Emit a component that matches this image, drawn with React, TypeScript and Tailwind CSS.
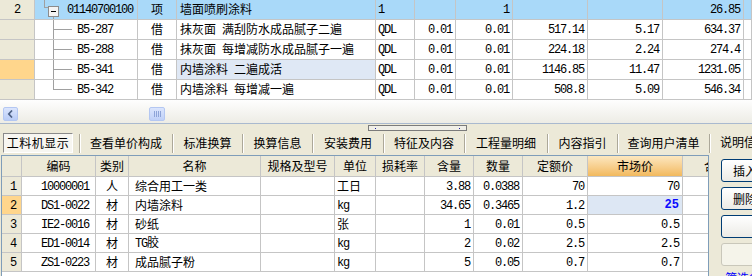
import React from 'react';

const cjk = "font-['Noto_Sans_CJK_SC',sans-serif]";
const mono = "font-['Liberation_Mono',monospace] tracking-[-1.2px]";

// splits a string into ascii runs (mono) and cjk runs
const Txt: React.FC<{ s: string; className?: string }> = ({ s, className = '' }) => (
  <span className={`whitespace-pre leading-none ${className}`}>
    {s
      .split(/([\x20-\x7e]+)/)
      .filter(Boolean)
      .map((p, i) =>
        /^[\x20-\x7e]+$/.test(p) ? (
          <span key={i} className={mono}>{p}</span>
        ) : (
          <span key={i} className={cjk}>{p}</span>
        )
      )}
  </span>
);

type TopRow = {
  num?: string;
  code: string;
  type: string;
  name: string;
  unit: string;
  v: string[];
  tree: 'root' | 'mid' | 'last';
  sel?: boolean;
  cur?: boolean;
};

const topRows: TopRow[] = [
  { num: '2', code: '01140700100', type: '项', name: '墙面喷刷涂料', unit: '1', v: ['', '1', '', '', '26.85'], tree: 'root', sel: true },
  { code: 'B5-287', type: '借', name: '抹灰面 满刮防水成品腻子二遍', unit: 'QDL', v: ['0.01', '0.01', '517.14', '5.17', '634.37'], tree: 'mid' },
  { code: 'B5-288', type: '借', name: '抹灰面 每增减防水成品腻子一遍', unit: 'QDL', v: ['0.01', '0.01', '224.18', '2.24', '274.4'], tree: 'mid' },
  { code: 'B5-341', type: '借', name: '内墙涂料 二遍成活', unit: 'QDL', v: ['0.01', '0.01', '1146.85', '11.47', '1231.05'], tree: 'mid', cur: true },
  { code: 'B5-342', type: '借', name: '内墙涂料 每增减一遍', unit: 'QDL', v: ['0.01', '0.01', '508.8', '5.09', '546.34'], tree: 'last' },
];

const TreeLines: React.FC<{ kind: TopRow['tree'] }> = ({ kind }) =>
  kind === 'root' ? (
    <>
      <span className="absolute left-[9px] top-0 w-px h-[7px] bg-[#a0a0a0]" />
      <span className="absolute left-[9px] top-[7px] w-[4px] h-px bg-[#a0a0a0]" />
      <span className="absolute left-[13px] top-[6px] w-[11px] h-[11px] border border-[#8c8c8c] bg-[#f4f4f4] flex items-center justify-center">
        <span className="w-[5px] h-px bg-black" />
      </span>
      <span className="absolute left-[18px] top-[17px] w-px h-[4px] bg-[#a0a0a0]" />
    </>
  ) : (
    <>
      <span className={`absolute left-[18px] top-0 w-px bg-[#a0a0a0] ${kind === 'last' ? 'h-[10px]' : 'h-[20px]'}`} />
      <span className="absolute left-[18px] top-[9px] w-[19px] h-px bg-[#a0a0a0]" />
    </>
  );

const TopGrid = () => (
  <div className="h-[100px] bg-white overflow-hidden">
    {topRows.map((r, i) => {
      const bg = r.sel ? 'bg-[#a9d9f9]' : 'bg-white';
      const cell = 'h-[20px] border-r border-b border-[#c5c5c5] flex items-center overflow-hidden text-[12px] text-black';
      return (
        <div key={i} className="grid grid-cols-[35px_103px_39px_199px_39px_41px_57px_75px_75px_81px_8px]">
          <div className={`${cell} justify-center ${r.cur ? 'bg-[#ffd68c]' : 'bg-[#ece9d8]'}`}>
            <Txt s={r.num ?? ''} />
          </div>
          <div className={`${cell} ${bg} relative`}>
            <TreeLines kind={r.tree} />
            <Txt s={r.code} className={r.tree === 'root' ? 'pl-[32px]' : 'pl-[42px]'} />
          </div>
          <div className={`${cell} ${bg} justify-center`}>
            <Txt s={r.type} />
          </div>
          <div className={`${cell} ${r.cur ? 'bg-[#dfe8f5]' : bg} pl-[3px]`}>
            <Txt s={r.name} />
          </div>
          <div className={`${cell} ${bg} pl-[2px]`}>
            <Txt s={r.unit} />
          </div>
          {r.v.map((x, j) => (
            <div key={j} className={`${cell} ${bg} justify-end pr-[3px]`}>
              <Txt s={x} />
            </div>
          ))}
          <div className={`${cell} ${bg}`} />
        </div>
      );
    })}
  </div>
);

const HScroll = () => (
  <div className="h-[24px] bg-linear-to-b from-[#fefefe] to-[#edece5] flex items-end pb-[2px] pl-[3px] border-b border-[#a9b9cf]">
    <div className="w-[15px] h-[14px] rounded-[2px] border border-[#b4c7f2] bg-linear-to-b from-[#dbe5fd] to-[#b9ccf6] flex items-center justify-center">
      <svg width="7" height="8" viewBox="0 0 7 8">
        <path d="M5 0.5 L1.8 4 L5 7.5" stroke="#4d6185" strokeWidth="1.7" fill="none" />
      </svg>
    </div>
    <div className="ml-[131px] w-[16px] h-[14px] rounded-[2px] border border-[#b4c7f2] bg-linear-to-b from-[#dbe5fd] to-[#bfd0f8] flex items-center justify-center gap-px">
      <span className="w-px h-[6px] bg-[#8ea4d8]" />
      <span className="w-px h-[6px] bg-[#8ea4d8]" />
      <span className="w-px h-[6px] bg-[#8ea4d8]" />
      <span className="w-px h-[6px] bg-[#8ea4d8]" />
    </div>
  </div>
);

const Splitter = () => (
  <div className="h-[7px]">
    <div className="ml-[368px] mt-[1px] w-[99px] h-[6px] border border-[#7b7b7b] bg-[#f0efe8] flex items-center justify-between px-[6px]">
      <span className="w-px h-px bg-[#2020a0]" />
      <span className="w-px h-px bg-[#2020a0]" />
    </div>
  </div>
);

const tabs = [
  { t: '查看单价构成', w: 'w-[92px]' },
  { t: '标准换算', w: 'w-[69px]' },
  { t: '换算信息', w: 'w-[69px]' },
  { t: '安装费用', w: 'w-[70px]' },
  { t: '特征及内容', w: 'w-[80px]' },
  { t: '工程量明细', w: 'w-[82px]' },
  { t: '内容指引', w: 'w-[69px]' },
  { t: '查询用户清单', w: 'w-[91px]' },
];

const Sep = () => <span className="w-px h-[19px] bg-[#aca899] shadow-[1px_0_0_#ffffff] shrink-0" />;

const Tabs = () => (
  <div className="h-[24px] flex items-center pl-[3px] text-[12px] text-black whitespace-nowrap overflow-hidden">
    <div className="w-[70px] h-[20px] shrink-0 border-t border-l border-[#8a8a8a] border-r-white border-b-white border-r border-b bg-[#f7f6f1] flex items-center justify-center">
      <span className={`${cjk} leading-none tracking-[0.5px]`}>工料机显示</span>
    </div>
    <span className="w-[6px] shrink-0" />
    <Sep />
    {tabs.map((tb) => (
      <React.Fragment key={tb.t}>
        <div className={`${tb.w} shrink-0 flex items-center justify-center`}>
          <span className={`${cjk} leading-none`}>{tb.t}</span>
        </div>
        <Sep />
      </React.Fragment>
    ))}
    <div className="shrink-0 pl-[10px]">
      <span className={`${cjk} leading-none`}>说明信息</span>
    </div>
  </div>
);

const heads = ['', '编码', '类别', '名称', '规格及型号', '单位', '损耗率', '含量', '数量', '定额价', '市场价', '合价'];

const bottomRows = [
  ['1', '10000001', '人', '综合用工一类', '', '工日', '', '3.88', '0.0388', '70', '70'],
  ['2', 'DS1-0022', '材', '内墙涂料', '', 'kg', '', '34.65', '0.3465', '1.2', '25'],
  ['3', 'IE2-0016', '材', '砂纸', '', '张', '', '1', '0.01', '0.5', '0.5'],
  ['4', 'ED1-0014', '材', 'TG胶', '', 'kg', '', '2', '0.02', '2.5', '2.5'],
  ['5', 'ZS1-0223', '材', '成品腻子粉', '', 'kg', '', '5', '0.05', '0.7', '0.7'],
];

const cols = 'grid grid-cols-[20px_74px_33px_132px_74px_41px_49px_49px_49px_65px_95px_67px]';

const BottomGrid = () => (
  <div className="w-[708px] h-full bg-white border-l border-t border-r border-[#7f9db9] overflow-hidden">
    <div className="w-[748px]">
      <div className={cols}>
        {heads.map((h, i) => (
          <div
            key={i}
            className={`h-[21px] border-r border-b border-[#c5c5c5] flex items-center justify-center text-[12px] text-black ${
              i === 10 ? 'bg-linear-to-b from-[#fce7bf] to-[#f2b95c]' : 'bg-[#ece9d8]'
            }`}
          >
            <span className={`${cjk} leading-none`}>{h}</span>
          </div>
        ))}
      </div>
      {bottomRows.map((r, i) => {
        const cell = 'h-[19px] border-r border-b border-[#c5c5c5] flex items-center overflow-hidden text-[12px] text-black';
        const isCur = i === 1;
        return (
          <div key={i} className={cols}>
            <div className={`${cell} pl-[8px] ${isCur ? 'bg-[#ffd68c]' : 'bg-[#ece9d8]'}`}>
              <Txt s={r[0]} />
            </div>
            <div className={`${cell} justify-end pr-[6px]`}>
              <Txt s={r[1]} />
            </div>
            <div className={`${cell} justify-center`}>
              <Txt s={r[2]} />
            </div>
            <div className={`${cell} pl-[6px]`}>
              <Txt s={r[3]} />
            </div>
            <div className={cell} />
            <div className={`${cell} pl-[2px]`}>
              <Txt s={r[5]} />
            </div>
            <div className={cell} />
            <div className={`${cell} justify-end pr-[3px]`}>
              <Txt s={r[7]} />
            </div>
            <div className={`${cell} justify-end pr-[3px]`}>
              <Txt s={r[8]} />
            </div>
            <div className={`${cell} justify-end pr-[3px]`}>
              <Txt s={r[9]} />
            </div>
            {isCur ? (
              <div className={`${cell} justify-end pr-[3px] bg-[#dde7f4]`}>
                <span className="font-['Liberation_Mono',monospace] font-bold text-[#0a0aff] leading-none">{r[10]}</span>
              </div>
            ) : (
              <div className={`${cell} justify-end pr-[3px]`}>
                <Txt s={r[10]} />
              </div>
            )}
            <div className={cell} />
          </div>
        );
      })}
    </div>
  </div>
);

const Btn: React.FC<{ label?: string; disabled?: boolean }> = ({ label = '', disabled }) => (
  <div
    className={`w-[48px] h-[23px] shrink-0 rounded-[3px] border flex items-center justify-center text-[12px] text-black ${
      disabled ? 'border-[#c9c7ba] bg-[#f5f4ea]' : 'border-[#003c74] bg-linear-to-b from-[#ffffff] to-[#ecebe6]'
    }`}
  >
    <span className={`${cjk} leading-none whitespace-nowrap`}>{label}</span>
  </div>
);

const SidePanel = () => (
  <div className="flex-1 overflow-hidden pt-[4px] pl-[12px] flex flex-col gap-[5px]">
    <Btn label="插入" />
    <Btn label="删除" />
    <Btn />
    <Btn disabled />
    <span className={`${cjk} text-[12px] leading-none text-[#0000ff] underline pl-[4px] mt-px whitespace-nowrap`}>筛选条件</span>
  </div>
);

export default function App() {
  return (
    <div className="w-[752px] h-[276px] overflow-hidden bg-[#ece9d8] flex flex-col">
      <TopGrid />
      <HScroll />
      <Splitter />
      <Tabs />
      <div className="flex-1 flex min-h-0 pl-[1px]">
        <BottomGrid />
        <SidePanel />
      </div>
    </div>
  );
}
